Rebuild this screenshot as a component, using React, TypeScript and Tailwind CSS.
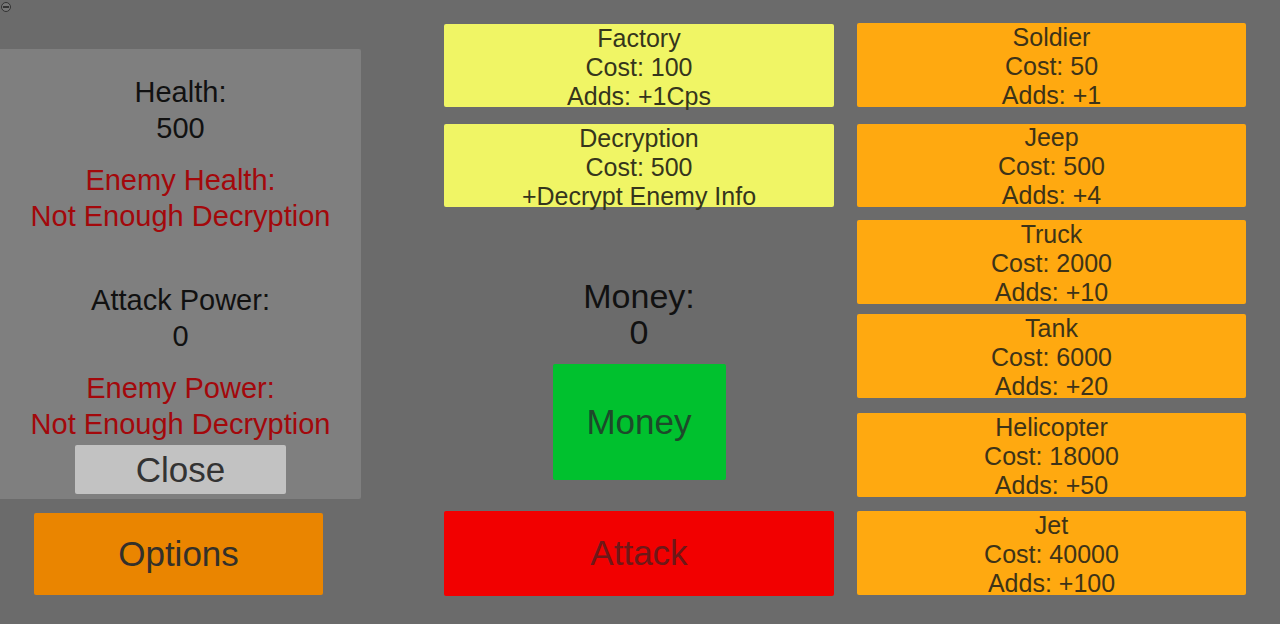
import React from "react";

const font = { fontFamily: '"Liberation Sans", Arial, sans-serif' };

function Unit({ name, cost, adds, cls }: { name: string; cost: string; adds: string; cls: string }) {
  return (
    <div className={`flex h-[84px] flex-col items-center justify-center overflow-visible rounded-[2px] bg-[#ffa910] pt-[2px] text-[25px] leading-[29px] text-[#3d3318] ${cls}`}>
      <div>{name}</div>
      <div>{cost}</div>
      <div>{adds}</div>
    </div>
  );
}

export default function App() {
  return (
    <div style={font} className="relative flex h-[624px] w-[1280px] overflow-hidden bg-[#6b6b6b]">
      <div className="absolute left-[1px] top-[2px] h-[10px] w-[10px] rounded-full border border-[#333] bg-[#777]">
        <div className="mx-auto mt-[3px] h-[2px] w-[6px] bg-[#333]" />
      </div>

      {/* Left column */}
      <div className="flex w-[362px] flex-col">
        <div className="mt-[49px] flex h-[450px] w-[361px] flex-col items-center rounded-r-[2px] bg-[#7f7f7f] pt-[25px] text-[29px] leading-[36px]">
          <div className="text-[#111]">Health:</div>
          <div className="text-[#111]">500</div>
          <div className="mt-[16px] text-[#a3080b]">Enemy Health:</div>
          <div className="text-[#a3080b]">Not Enough Decryption</div>
          <div className="mt-[48px] text-[#111]">Attack Power:</div>
          <div className="text-[#111]">0</div>
          <div className="mt-[16px] text-[#a3080b]">Enemy Power:</div>
          <div className="text-[#a3080b]">Not Enough Decryption</div>
          <div className="mt-[3px] flex h-[49px] w-[211px] items-center justify-center rounded-[2px] bg-[#c2c2c2] text-[35px] text-[#333]">
            Close
          </div>
        </div>
        <div className="ml-[34px] mt-[14px] flex h-[82px] w-[289px] items-center justify-center rounded-[2px] bg-[#ea8500] text-[35px] text-[#33302a]">
          Options
        </div>
      </div>

      {/* Center column */}
      <div className="ml-[82px] flex w-[390px] flex-col items-center">
        <div className="mt-[24px] flex h-[83px] w-full flex-col items-center justify-center rounded-[2px] bg-[#f0f565] pt-[4px] text-[25px] leading-[29px] text-[#35351c]">
          <div>Factory</div>
          <div>Cost: 100</div>
          <div>Adds: +1Cps</div>
        </div>
        <div className="mt-[17px] flex h-[83px] w-full flex-col items-center justify-center rounded-[2px] bg-[#f0f565] pt-[4px] text-[25px] leading-[29px] text-[#35351c]">
          <div>Decryption</div>
          <div>Cost: 500</div>
          <div>+Decrypt Enemy Info</div>
        </div>
        <div className="mt-[71px] text-[34px] leading-[36px] text-[#111]">Money:</div>
        <div className="text-[34px] leading-[36px] text-[#111]">0</div>
        <div className="mt-[14px] flex h-[116px] w-[173px] items-center justify-center rounded-[2px] bg-[#00c12e] text-[35px] text-[#1d4a2a]">
          Money
        </div>
        <div className="mt-[31px] flex h-[85px] w-full items-center justify-center rounded-[2px] bg-[#f20000] text-[35px] text-[#6e1818]">
          Attack
        </div>
      </div>

      {/* Right column */}
      <div className="ml-[23px] flex w-[389px] flex-col">
        <Unit cls="mt-[23px]" name="Soldier" cost="Cost: 50" adds="Adds: +1" />
        <Unit cls="mt-[17px] !h-[83px]" name="Jeep" cost="Cost: 500" adds="Adds: +4" />
        <Unit cls="mt-[13px]" name="Truck" cost="Cost: 2000" adds="Adds: +10" />
        <Unit cls="mt-[10px]" name="Tank" cost="Cost: 6000" adds="Adds: +20" />
        <Unit cls="mt-[15px]" name="Helicopter" cost="Cost: 18000" adds="Adds: +50" />
        <Unit cls="mt-[14px]" name="Jet" cost="Cost: 40000" adds="Adds: +100" />
      </div>
    </div>
  );
}
